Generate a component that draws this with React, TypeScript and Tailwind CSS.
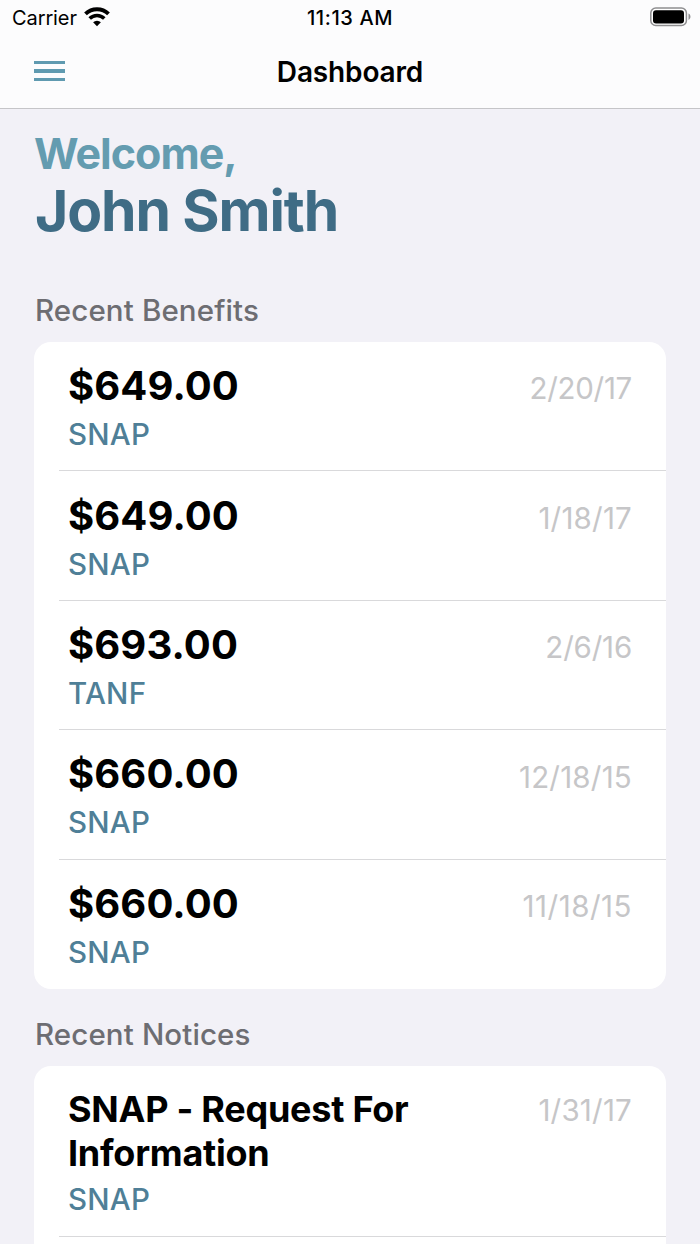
type Entry = {
  title: string
  program: string
  date: string
  dateSpacing: string
}

const benefits: Entry[] = [
  { title: '$649.00', program: 'SNAP', date: '2/20/17', dateSpacing: 'tracking-[-0.3px]' },
  { title: '$649.00', program: 'SNAP', date: '1/18/17', dateSpacing: 'tracking-[0.2px]' },
  { title: '$693.00', program: 'TANF', date: '2/6/16', dateSpacing: 'tracking-[-0.2px]' },
  { title: '$660.00', program: 'SNAP', date: '12/18/15', dateSpacing: 'tracking-[0.2px]' },
  { title: '$660.00', program: 'SNAP', date: '11/18/15', dateSpacing: 'tracking-[0.5px]' },
]

const notices: Entry[] = [
  {
    title: 'SNAP - Request For Information',
    program: 'SNAP',
    date: '1/31/17',
    dateSpacing: 'tracking-[0.2px]',
  },
]

const WifiIcon = () => (
  <svg className="mb-[2px] ml-[7px] h-5 w-[26px]" viewBox="0 0 26 20" fill="none" stroke="#000">
    <path d="M1.5 6.9a16.4 16.4 0 0 1 23 0" strokeWidth="3.9" />
    <path d="M5.7 11.5a10.2 10.2 0 0 1 14.6 0" strokeWidth="3.5" />
    <path d="M13 19.2l-3.9-4a5.7 5.7 0 0 1 7.8 0z" fill="#000" stroke="none" />
  </svg>
)

const BatteryIcon = () => (
  <svg className="mb-[2px] h-5 w-[42px]" viewBox="0 0 42 20">
    <rect x="0.8" y="1" width="35.6" height="17.4" rx="5" fill="#fff" stroke="#8e8e90" strokeWidth="1.5" />
    <rect x="3" y="3.2" width="31" height="13.2" rx="3" fill="#000" />
    <path d="M38.5 6.6c2.6 1.2 2.6 5.2 0 6.4z" fill="#8e8e90" />
  </svg>
)

const StatusBar = () => (
  <div className="grid h-9 grid-cols-3 items-center">
    <div className="flex items-center pl-[12px]">
      <span className="text-xl tracking-[-0.1px]">Carrier</span>
      <WifiIcon />
    </div>
    <span className="text-center text-xl font-medium tracking-[0.6px]">11:13 AM</span>
    <div className="flex justify-end pr-[8px]">
      <BatteryIcon />
    </div>
  </div>
)

const NavBar = () => (
  <div className="grid h-[70px] grid-cols-[1fr_auto_1fr] items-center px-[34px]">
    <button className="flex w-[31px] flex-col gap-[5px]" aria-label="Menu">
      <span className="h-[3.5px] bg-[#5f9ab0]" />
      <span className="h-[3.5px] bg-[#5f9ab0]" />
      <span className="h-[3.5px] bg-[#5f9ab0]" />
    </button>
    <h1 className="pt-px text-[28px] font-semibold tracking-[-0.15px]">Dashboard</h1>
  </div>
)

const SectionTitle = ({ children }: { children: string }) => (
  <h3 className="pl-px text-[29.5px] leading-9 font-medium tracking-[0.12px] text-[#6d6d72]">{children}</h3>
)

const BenefitRow = ({ title, program, date, dateSpacing }: Entry) => (
  <li className="group flex h-[129.4px] pl-[25px]">
    <div className="flex flex-1 items-start justify-between border-b border-[#d9d9db] pr-[34px] pl-[9px] group-last:border-b-0">
      <div className="pt-[19.3px]">
        <p className="text-[40px] leading-[50px] font-bold tracking-[0.1px]">{title}</p>
        <p className="mt-[5px] text-[29.5px] leading-9 font-medium tracking-[0.25px] text-[#4f7f97]">{program}</p>
      </div>
      <span className={`pt-[28.4px] text-[29.5px] leading-9 text-[#c6c6c8] ${dateSpacing}`}>{date}</span>
    </div>
  </li>
)

const NoticeRow = ({ title, program, date, dateSpacing }: Entry) => (
  <li className="flex h-[171px] pl-[25px]">
    <div className="flex flex-1 items-start justify-between border-b border-[#d9d9db] pr-[34px] pl-[9px]">
      <div className="w-[370px] pt-[21px]">
        <p className="text-[36px] leading-[44px] font-[650] tracking-[-0.25px]">{title}</p>
        <p className="mt-[6px] text-[29.5px] leading-9 font-medium tracking-[0.25px] text-[#4f7f97]">{program}</p>
      </div>
      <span className={`pt-[26px] text-[29.5px] leading-9 text-[#c6c6c8] ${dateSpacing}`}>{date}</span>
    </div>
  </li>
)

export default function App() {
  return (
    <div className="flex h-[1244px] w-[700px] flex-col overflow-hidden bg-[#f2f1f7] font-['Inter',sans-serif] text-black">
      <header className="h-[109px] shrink-0 border-b border-[#c5c5c8] bg-[#fcfcfd]">
        <StatusBar />
        <NavBar />
      </header>

      <main className="px-[34px] pt-[18px]">
        <p className="text-[43px] leading-[52px] font-bold tracking-[-1px] text-[#649cb0]">Welcome,</p>
        <h2 className="pl-px text-[57px] leading-[64px] font-bold tracking-[-1.1px] text-[#3f6c85]">John Smith</h2>

        <section className="mt-[49px]">
          <SectionTitle>Recent Benefits</SectionTitle>
          <ul className="mt-[14px] overflow-hidden rounded-[17px] bg-white">
            {benefits.map((benefit) => (
              <BenefitRow key={benefit.date} {...benefit} />
            ))}
          </ul>
        </section>

        <section className="mt-[27px]">
          <SectionTitle>Recent Notices</SectionTitle>
          <ul className="mt-[14px] h-[220px] overflow-hidden rounded-[17px] bg-white">
            {notices.map((notice) => (
              <NoticeRow key={notice.date} {...notice} />
            ))}
          </ul>
        </section>
      </main>
    </div>
  )
}
